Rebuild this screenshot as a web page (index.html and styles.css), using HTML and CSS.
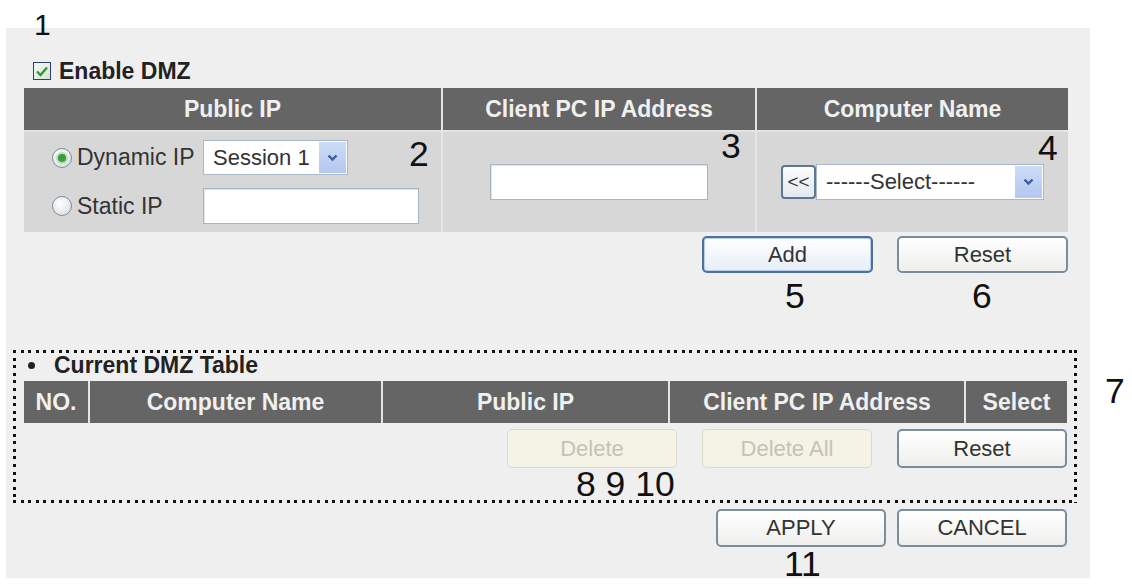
FILE: index.html
```html
<!DOCTYPE html>
<html lang="en">
<head>
    <meta charset="UTF-8">
    <meta name="viewport" content="width=device-width, initial-scale=1.0">
    <title>DMZ Setup</title>
    <link rel="stylesheet" href="styles.css">
</head>
<body>
    <div class="page">
        <div class="panel">
            <label class="enable">
                <span class="check">
                    <svg width="14" height="12" viewBox="0 0 14 12"><path d="M2 6.5 L5.5 10 L12 2.5" fill="none" stroke="#2f9a2f" stroke-width="2.4"/></svg>
                </span>
                Enable DMZ
            </label>

            <div class="dmz-form">
                <div class="th">Public IP</div>
                <div class="th">Client PC IP Address</div>
                <div class="th">Computer Name</div>

                <div class="td ip-cell">
                    <div class="ip-row">
                        <span class="radio on"></span>
                        <span class="ip-label">Dynamic IP</span>
                        <div class="select session-select">
                            Session 1
                            <span class="arrow"><svg width="11" height="8" viewBox="0 0 11 8"><path d="M1.5 1.5 L5.5 5.5 L9.5 1.5" fill="none" stroke="#3d5da3" stroke-width="2.4"/></svg></span>
                        </div>
                    </div>
                    <div class="ip-row">
                        <span class="radio"></span>
                        <span class="ip-label">Static IP</span>
                        <div class="field static-field"></div>
                    </div>
                </div>
                <div class="td center">
                    <div class="field client-field"></div>
                </div>
                <div class="td center">
                    <button class="pick">&lt;&lt;</button>
                    <div class="select name-select">
                        ------Select------
                        <span class="arrow"><svg width="11" height="8" viewBox="0 0 11 8"><path d="M1.5 1.5 L5.5 5.5 L9.5 1.5" fill="none" stroke="#3d5da3" stroke-width="2.4"/></svg></span>
                    </div>
                </div>
            </div>

            <div class="btn-row form-btns">
                <button class="btn focused">Add</button>
                <button class="btn">Reset</button>
            </div>

            <div class="dmz-box">
                <div class="list-title"><span class="bullet"></span>Current DMZ Table</div>
                <div class="dmz-list">
                    <div class="th">NO.</div>
                    <div class="th">Computer Name</div>
                    <div class="th">Public IP</div>
                    <div class="th">Client PC IP Address</div>
                    <div class="th">Select</div>
                </div>
                <div class="btn-row list-btns">
                    <button class="btn" disabled>Delete</button>
                    <button class="btn" disabled>Delete All</button>
                    <button class="btn">Reset</button>
                </div>
            </div>

            <div class="btn-row page-btns">
                <button class="btn">APPLY</button>
                <button class="btn">CANCEL</button>
            </div>
        </div>

        <!-- numbered callouts -->
        <span class="callout small n1">1</span>
        <span class="callout n2">2</span>
        <span class="callout n3">3</span>
        <span class="callout n4">4</span>
        <span class="callout n5">5</span>
        <span class="callout n6">6</span>
        <span class="callout n7">7</span>
        <span class="callout n8">8 9 10</span>
        <span class="callout n11">11</span>
    </div>
</body>
</html>
```

FILE: styles.css
```css
* {
    margin: 0;
    padding: 0;
    box-sizing: border-box;
}

body {
    font-family: 'Liberation Sans', Arial, sans-serif;
    background: white;
    color: #333;
}

.page {
    position: relative;
    width: 1132px;
    height: 584px;
    padding: 28px 0 0 6px;
}

.panel {
    width: 1084px;
    height: 550px;
    background: #efefef;
    padding-top: 30px;
}

/* enable checkbox */
.enable {
    display: flex;
    align-items: center;
    gap: 8px;
    height: 26px;
    padding-left: 27px;
    font-size: 23px;
    font-weight: bold;
    color: #222;
}

.check {
    width: 18px;
    height: 18px;
    border: 1px solid #2d4460;
    background: linear-gradient(135deg, #f4f8f4, #d8e4d8);
    display: flex;
    align-items: center;
    justify-content: center;
}

/* tables */
.dmz-form,
.dmz-list {
    display: grid;
    gap: 2px;
    background: #e4e4e4;
}

.dmz-form {
    margin: 4px 0 0 18px;
    width: 1044px;
    grid-template-columns: 417px 312px 311px;
    grid-template-rows: 42px 100px;
}

.dmz-list {
    margin: 4px 0 0 8px;
    width: 1043px;
    grid-template-columns: 64px 291px 285px 294px 101px;
    grid-template-rows: 42px;
}

.th {
    background: #656565;
    color: #f0f0f0;
    font-size: 23px;
    font-weight: bold;
    display: flex;
    align-items: center;
    justify-content: center;
}

.td {
    background: #d7d7d7;
}

.td.center {
    display: flex;
    align-items: center;
    justify-content: center;
}

.ip-cell {
    padding: 8px 0 0 28px;
    display: flex;
    flex-direction: column;
    gap: 13px;
}

.ip-row {
    display: flex;
    align-items: center;
    height: 35px;
}

.ip-row:last-child {
    height: 36px;
}

.ip-label {
    width: 126px;
    margin-left: 5px;
    font-size: 23px;
    color: #333;
}

.radio {
    width: 20px;
    height: 20px;
    border-radius: 50%;
    border: 1px solid #7d8c9c;
    background: radial-gradient(circle at 40% 35%, #ffffff, #d4d8dc);
    display: flex;
    align-items: center;
    justify-content: center;
}

.radio.on::after {
    content: "";
    width: 8px;
    height: 8px;
    border-radius: 50%;
    background: #3a9f3a;
    box-shadow: 0 0 0 2px #b8e0b8;
}

/* form controls */
.field {
    height: 36px;
    background: white;
    border: 1px solid #a8b4c2;
    box-shadow: inset 1px 1px 1px #dde3ea;
}

.static-field {
    width: 216px;
}

.client-field {
    width: 218px;
}

.select {
    height: 35px;
    background: white;
    border: 1px solid #a8b8cc;
    font-size: 22px;
    color: #333;
    display: flex;
    align-items: center;
    position: relative;
}

.session-select {
    width: 145px;
    padding-left: 9px;
}

.name-select {
    width: 228px;
    height: 36px;
    padding-left: 9px;
}

.select .arrow {
    position: absolute;
    right: 1px;
    top: 1px;
    bottom: 1px;
    width: 27px;
    background: linear-gradient(#cddcf6, #b3c8ef);
    display: flex;
    align-items: center;
    justify-content: center;
}

.pick {
    width: 35px;
    height: 34px;
    border: 2px solid #5f7891;
    border-radius: 4px;
    background: linear-gradient(#fbfcfd, #e3e9f0);
    font-family: inherit;
    font-size: 19px;
    color: #333;
}

/* buttons */
.btn-row {
    display: flex;
    justify-content: flex-end;
}

.btn {
    width: 171px;
    height: 37px;
    border: 2px solid #7c8c9c;
    border-radius: 5px;
    background: linear-gradient(#ffffff, #eeeeec);
    font-family: inherit;
    font-size: 22px;
    color: #333;
}

.btn.focused {
    border-color: #4f6f9d;
    background: linear-gradient(#ffffff, #e6eef8);
    box-shadow: inset 0 0 0 1px #b7cdea;
}

.btn:disabled {
    border: 1px solid #dcdacb;
    background: #f5f3e5;
    color: #c3c3b6;
}

.form-btns {
    width: 1062px;
    margin-top: 4px;
    gap: 24px;
}

.list-btns {
    margin-top: 6px;
    padding-right: 7px;
    gap: 25px;
}

.list-btns .btn {
    width: 170px;
    height: 39px;
}

.page-btns {
    width: 1061px;
    margin-top: 6px;
    gap: 11px;
}

.page-btns .btn {
    width: 170px;
    height: 38px;
}

/* dotted frame around the list */
.dmz-box {
    margin: 77px 0 0 7px;
    width: 1064px;
    height: 153px;
    padding: 3px 3px 0;
    background:
        repeating-linear-gradient(90deg, #111 0 3px, transparent 3px 7.6px) top left / 100% 3px no-repeat,
        repeating-linear-gradient(90deg, #111 0 3px, transparent 3px 7.6px) bottom left / 100% 3px no-repeat,
        repeating-linear-gradient(180deg, #111 0 3px, transparent 3px 7.6px) top left / 3px 100% no-repeat,
        repeating-linear-gradient(180deg, #111 0 3px, transparent 3px 7.6px) top right / 3px 100% no-repeat;
}

.list-title {
    display: flex;
    align-items: center;
    height: 24px;
    padding-left: 12px;
    font-size: 23px;
    font-weight: bold;
    color: #222;
}

.bullet {
    width: 7px;
    height: 7px;
    border-radius: 50%;
    background: #222;
    margin-right: 19px;
}

/* callout numbers */
.callout {
    position: absolute;
    font-size: 35.5px;
    line-height: 1;
    color: #111;
    white-space: nowrap;
}

.callout.small {
    font-size: 30px;
}

.n1 { left: 34px; top: 10px; }
.n2 { left: 409px; top: 137px; }
.n3 { left: 721px; top: 129px; }
.n4 { left: 1038px; top: 131px; }
.n5 { left: 785px; top: 279px; }
.n6 { left: 972px; top: 279px; }
.n7 { left: 1105px; top: 374px; }
.n8 { left: 576px; top: 467px; }
.n11 { left: 784px; top: 547px; }
```
